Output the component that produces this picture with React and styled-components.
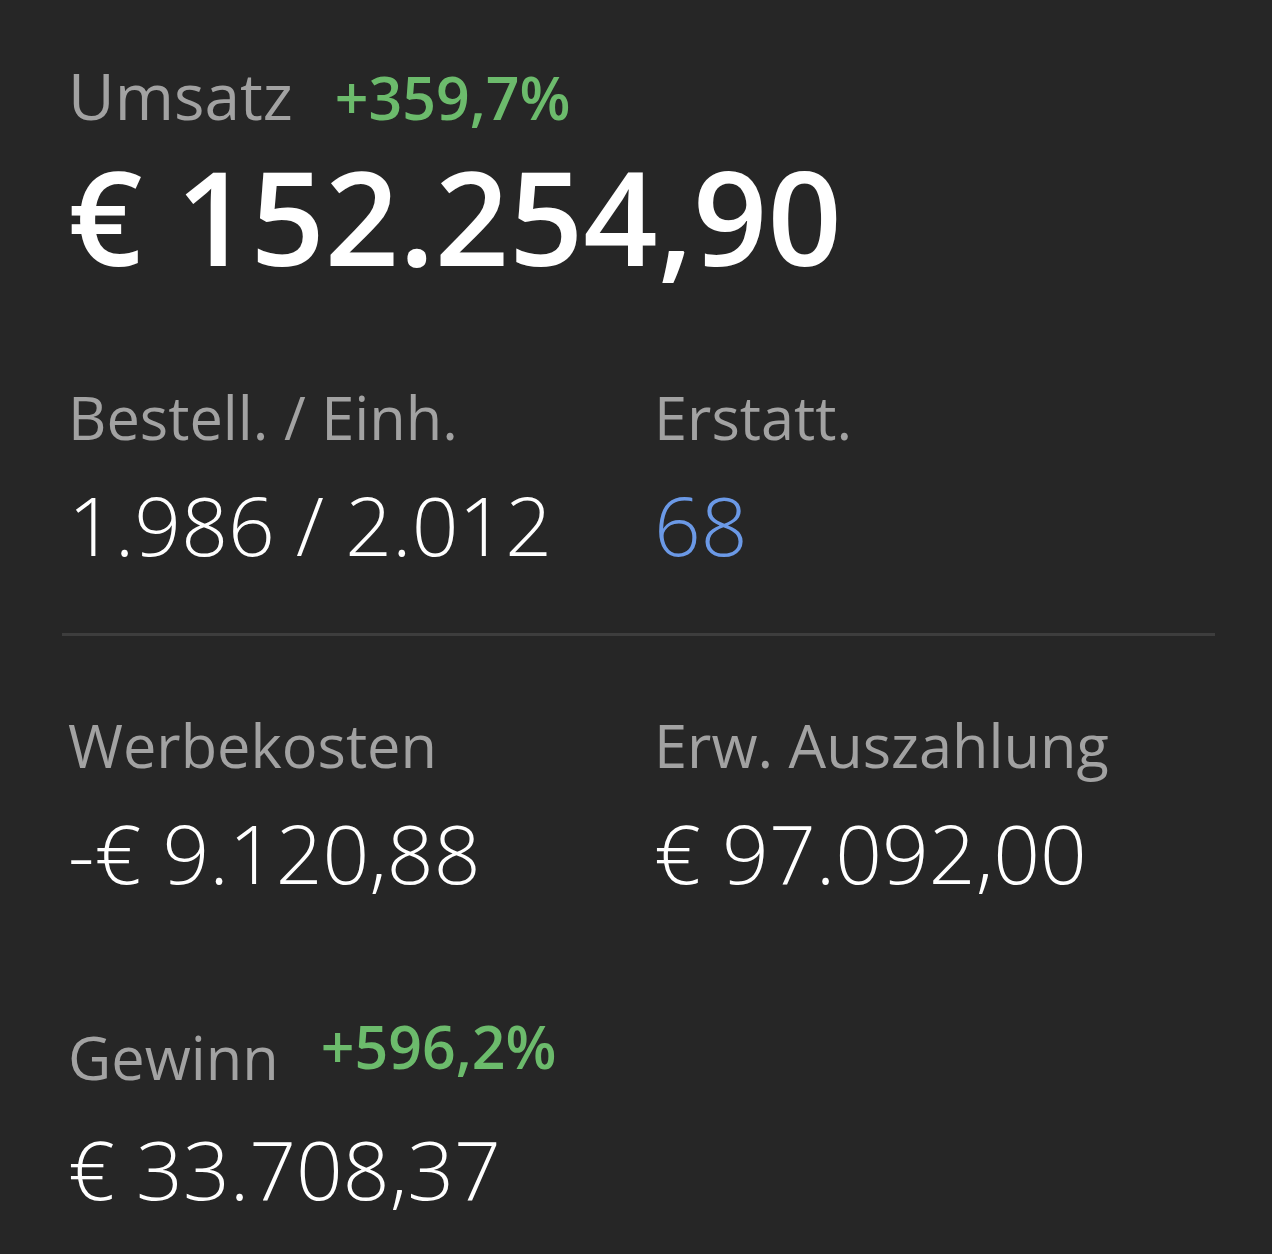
import styled, { createGlobalStyle } from "styled-components";

const GlobalStyle = createGlobalStyle`
  html, body {
    margin: 0;
    padding: 0;
    background: #262626;
  }
  body {
    font-family: "Open Sans", "Noto Sans", sans-serif;
    -webkit-font-smoothing: antialiased;
  }
`;

const Panel = styled.div`
  width: 1272px;
  height: 1254px;
  box-sizing: border-box;
  background: #262626;
  padding: 65px 57px 0 68px;
  color: #ffffff;
`;

const Block = styled.section`
  display: grid;
  grid-template-columns: 586px 1fr;
  margin-top: ${(p) => p.$top || 0}px;
`;

const Cell = styled.div`
  display: flex;
  flex-direction: column;
`;

const Label = styled.div`
  font-size: ${(p) => p.$size || 59.5}px;
  line-height: 62px;
  font-weight: 400;
  color: #a2a2a2;
  white-space: nowrap;
`;

/* the growth figure next to a label; $lift nudges it up without changing the row height */
const Pct = styled.span`
  display: inline-block;
  margin-left: ${(p) => p.$gap || 40}px;
  font-size: 59px;
  font-weight: 600;
  color: #6cbb6c;
  transform: translateY(-${(p) => p.$lift || 0}px);
`;

const BigValue = styled.div`
  margin-top: 23px;
  font-size: 130px;
  line-height: 130px;
  font-weight: 600;
  white-space: nowrap;
`;

const Value = styled.div`
  margin-top: ${(p) => p.$gap || 35}px;
  font-size: 82px;
  line-height: 82px;
  font-weight: 300;
  color: ${(p) => p.$color || "#ffffff"};
  white-space: nowrap;
`;

const Divider = styled.hr`
  margin: 68px 0 0 -6px;
  border: 0;
  height: 3px;
  background: #3d3d3d;
`;

const App = () => (
  <>
    <GlobalStyle />
    <Panel>
      <Cell>
        <Label $size={64}>
          Umsatz<Pct $gap={42}>+359,7%</Pct>
        </Label>
        <BigValue>€ 152.254,90</BigValue>
      </Cell>

      <Block $top={105}>
        <Cell>
          <Label>Bestell. / Einh.</Label>
          <Value>1.986 / 2.012</Value>
        </Cell>
        <Cell>
          <Label>Erstatt.</Label>
          <Value $color="#6b99e6">68</Value>
        </Cell>
      </Block>

      <Divider />

      <Block $top={78}>
        <Cell>
          <Label>Werbekosten</Label>
          <Value>-€ 9.120,88</Value>
        </Cell>
        <Cell>
          <Label>Erw. Auszahlung</Label>
          <Value>€ 97.092,00</Value>
        </Cell>
      </Block>

      <Block $top={133}>
        <Cell>
          <Label>
            Gewinn<Pct $lift={11} $gap={42}>+596,2%</Pct>
          </Label>
          <Value $gap={39}>€ 33.708,37</Value>
        </Cell>
      </Block>
    </Panel>
  </>
);

export default App;
